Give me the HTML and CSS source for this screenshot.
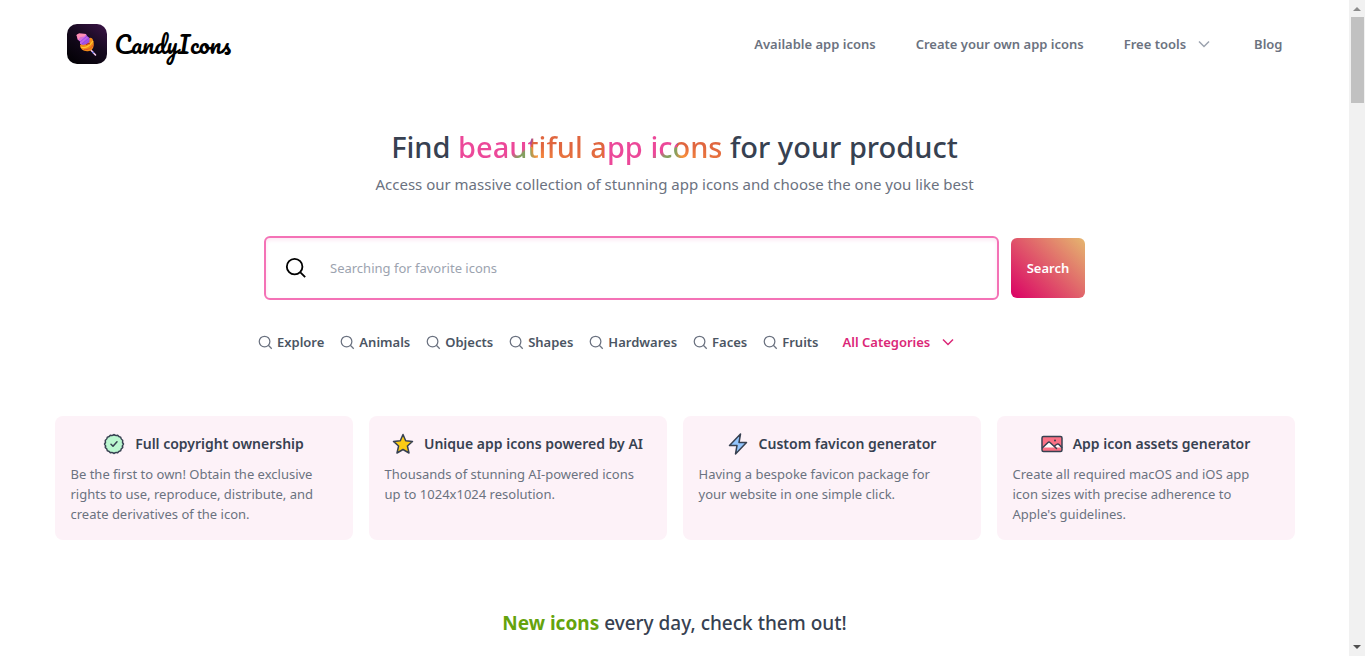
FILE: index.html
```html
<!DOCTYPE html>
<html lang="en">
<head>
  <meta charset="UTF-8">
  <meta name="viewport" content="width=device-width, initial-scale=1.0">
  <title>CandyIcons</title>
  <link rel="stylesheet" href="styles.css">
</head>
<body>
  <svg class="sprite" width="0" height="0" aria-hidden="true">
    <symbol id="search" viewBox="0 0 24 24">
      <circle cx="10.500" cy="10.500" r="8.500"/>
      <path d="M16.500 16.500L22 22"/>
    </symbol>
    <symbol id="chevron" viewBox="0 0 12 12">
      <path d="M1 3.500L6 8.500L11 3.500"/>
    </symbol>
  </svg>

  <div class="page">
    <header class="header">
      <a class="brand" href="#">
        <svg class="logo" viewBox="0 0 40 40" aria-hidden="true">
          <defs>
            <linearGradient id="logo-bg" x1="1" y1="0" x2="0.300" y2="1">
              <stop offset="0" stop-color="#3d1448"/>
              <stop offset="0.500" stop-color="#160a1f"/>
              <stop offset="1" stop-color="#050208"/>
            </linearGradient>
            <linearGradient id="candy" x1="0" y1="0" x2="1" y2="1">
              <stop offset="0" stop-color="#ff6fa8"/>
              <stop offset="0.500" stop-color="#c86fe8"/>
              <stop offset="1" stop-color="#7a35e0"/>
            </linearGradient>
          </defs>
          <rect width="40" height="40" rx="10" fill="url(#logo-bg)"/>
          <path d="M23 25L28.500 31" stroke="#f3c9ee" stroke-width="1.600" stroke-linecap="round"/>
          <path d="M25.500 28L26.500 29" stroke="#5b6cf0" stroke-width="1.600"/>
          <path d="M13 21C13 25 17 28 22 27C26 27 28 21 26 16C25 13 22 13 20 16Z" fill="#f28a18"/>
          <path d="M9.500 11L12 9.500L19 10L20 12L22.500 14L22.500 18L20 20L16 21L13 20L13 17.500L10.500 15.500Z" fill="url(#candy)"/>
          <path d="M9.500 11L12 9.500L19 10L17.500 12.500L13 13L11.500 16Z" fill="#ff8fb4"/>
          <path d="M13 18L20 12M15 20L22 14" stroke="#8d3bf0" stroke-width="0.800"/>
          <path d="M14 23C18 25 23 22 26 17" stroke="#ffc52e" stroke-width="1.300" fill="none"/>
          <path d="M17 25.500C21 26 25 24 26 21" stroke="#e2542b" stroke-width="1" fill="none"/>
          <path d="M19 21C20 20 22 19 23 20" stroke="#b3261e" stroke-width="1" fill="none"/>
        </svg>
        <span class="brand-name">CandyIcons</span>
      </a>
      <nav class="nav">
        <a href="#">Available app icons</a>
        <a href="#">Create your own app icons</a>
        <button type="button">Free tools <svg class="chevron"><use href="#chevron"/></svg></button>
        <a href="#">Blog</a>
      </nav>
    </header>

    <main>
      <section class="hero">
        <h1>Find <span class="rainbow">beautiful app icons</span> for your product</h1>
        <p>Access our massive collection of stunning app icons and choose the one you like best</p>
      </section>

      <form class="search">
        <label class="search-box">
          <svg class="search-icon" role="img" aria-label="Search"><use href="#search"/></svg>
          <input type="text" placeholder="Searching for favorite icons">
        </label>
        <button type="submit">Search</button>
      </form>

      <div class="categories">
        <a href="#"><svg><use href="#search"/></svg>Explore</a>
        <a href="#"><svg><use href="#search"/></svg>Animals</a>
        <a href="#"><svg><use href="#search"/></svg>Objects</a>
        <a href="#"><svg><use href="#search"/></svg>Shapes</a>
        <a href="#"><svg><use href="#search"/></svg>Hardwares</a>
        <a href="#"><svg><use href="#search"/></svg>Faces</a>
        <a href="#"><svg><use href="#search"/></svg>Fruits</a>
        <button type="button">All Categories <svg class="chevron"><use href="#chevron"/></svg></button>
      </div>

      <section class="features">
        <article class="feature">
          <h2>
            <svg viewBox="0 0 22 22"><path d="M11 1.500Q12.500 3 14.600 2.300Q15.800 4 17.700 4.300Q17.800 6.300 19.700 7.400Q19 9.500 20.500 11Q19 12.500 19.700 14.600Q17.800 15.700 17.700 17.700Q15.800 18 14.600 19.700Q12.500 19 11 20.500Q9.500 19 7.400 19.700Q6.200 18 4.300 17.700Q4.200 15.700 2.300 14.600Q3 12.500 1.500 11Q3 9.500 2.300 7.400Q4.200 6.300 4.300 4.300Q6.200 4 7.400 2.300Q9.500 3 11 1.500Z" fill="#bbf7d0"/><path d="M8 11.200L10 13.200L14 8.800" fill="none"/></svg>
            Full copyright ownership
          </h2>
          <p>Be the first to own! Obtain the exclusive rights to use, reproduce, distribute, and create derivatives of the icon.</p>
        </article>
        <article class="feature">
          <h2>
            <svg viewBox="0 0 22 22"><path d="M11 1.500L13.700 7.800L20.500 8.400L15.400 13L17 20L11 16.500L5 20L6.600 13L1.500 8.400L8.300 7.800Z" fill="#facc15"/></svg>
            Unique app icons powered by AI
          </h2>
          <p>Thousands of stunning AI-powered icons up to 1024x1024 resolution.</p>
        </article>
        <article class="feature">
          <h2>
            <svg viewBox="0 0 22 22"><path d="M13.500 1L2.500 12.500H10L8.500 21L19.500 9.500H12Z" fill="#93c5fd"/></svg>
            Custom favicon generator
          </h2>
          <p>Having a bespoke favicon package for your website in one simple click.</p>
        </article>
        <article class="feature">
          <h2>
            <svg viewBox="0 0 22 22"><rect x="1" y="3.500" width="20" height="15" rx="1.500" fill="#fb7185"/><path d="M2 14.500L7 9.500Q8 8.500 9 9.500L14.500 15L15 12.500L16 11.500Q17 11 18 11.800L20.500 14.500Z" fill="#fff" stroke="none"/><path d="M1.500 14.800L7 9.500Q8 8.500 9 9.500L15.500 15.500M13.500 13L15.500 11.500Q17 10.500 18 11.500L20.800 14.500" fill="none"/><circle class="dot" cx="14" cy="7.500" r="1"/></svg>
            App icon assets generator
          </h2>
          <p>Create all required macOS and iOS app icon sizes with precise adherence to Apple's guidelines.</p>
        </article>
      </section>

      <h2 class="new-icons"><strong>New icons</strong> every day, check them out!</h2>
    </main>
  </div>

  <div class="scrollbar" aria-hidden="true">
    <svg viewBox="0 0 16 17"><path d="M4 11L8 7L12 11Z" fill="#8b8b8b"/></svg>
    <div class="thumb"></div>
    <svg viewBox="0 0 16 17"><path d="M4 6L8 10L12 6Z" fill="#505050"/></svg>
  </div>
</body>
</html>
```
FILE: styles.css
```css
* {
  box-sizing: border-box;
}
body {
  display: flex;
  margin: 0;
  min-height: 100vh;
  font-family: "Segoe UI", "Noto Sans", sans-serif;
  font-size: 13px;
  line-height: 20px;
  color: #374151;
  background: #fff;
}
h1, h2, p {
  margin: 0;
}
a {
  color: inherit;
  text-decoration: none;
}
button {
  padding: 0;
  border: none;
  background: none;
  font: inherit;
  color: inherit;
  cursor: pointer;
}
.sprite {
  position: absolute;
}
.page {
  flex: 1;
  min-width: 0;
}
.header {
  display: flex;
  align-items: center;
  justify-content: space-between;
  max-width: 1280px;
  margin: 0 auto;
  padding: 24px 32px;
}
.brand {
  display: flex;
  align-items: center;
  gap: 8px;
}
.logo {
  width: 40px;
  height: 40px;
}
.brand-name {
  font-family: Pacifico, cursive;
  font-size: 24px;
  line-height: 40px;
  color: #000;
}
.nav {
  display: flex;
  align-items: center;
  gap: 40px;
  font-weight: 600;
  color: #6b7280;
}
.nav button {
  display: flex;
  align-items: center;
  gap: 12px;
}
.nav a:last-child {
  margin-left: 4px;
}
.chevron {
  width: 12px;
  height: 12px;
  fill: none;
  stroke: #9ca3af;
  stroke-width: 1.500;
}
.hero {
  padding-top: 39px;
  text-align: center;
}
h1 {
  font-size: 29px;
  font-weight: 500;
  line-height: 40px;
}
.rainbow {
  color: transparent;
  background: conic-gradient(from 0deg, #9c4aa8, #e0663f 25deg, #e0663f 90deg, #fb923c 150deg, #84a060 190deg, #84a060 230deg, #ec4899 250deg, #ec4899 330deg, #9c4aa8) 0 0 / 146px 100%;
  -webkit-background-clip: text;
  background-clip: text;
}
.hero p {
  margin-top: 5px;
  font-size: 15px;
  line-height: 24px;
  color: #6b7280;
}
.search {
  display: flex;
  align-items: center;
  gap: 12px;
  max-width: 821px;
  margin: 40px auto 0;
}
.search-box {
  display: flex;
  flex: 1;
  align-items: center;
  gap: 21px;
  height: 64px;
  padding: 0 19px;
  border: 2px solid #f472b6;
  border-radius: 6px;
  box-shadow: inset 0 2px 4px #fce7f3;
}
.search-icon {
  width: 22px;
  height: 22px;
  fill: none;
  stroke: #000;
  stroke-width: 2;
}
.search input {
  flex: 1;
  border: none;
  outline: none;
  background: none;
  font: inherit;
}
.search input::placeholder {
  color: #9ca3af;
}
.search button {
  width: 74px;
  height: 60px;
  border-radius: 6px;
  font-weight: 600;
  color: #fff;
  background: linear-gradient(45deg, #db0065, #e5b76f);
}
.categories {
  display: flex;
  flex-wrap: wrap;
  gap: 16px;
  max-width: 833px;
  margin: 32px auto 0;
  font-weight: 600;
  color: #4b5563;
}
.categories a {
  display: flex;
  align-items: center;
  gap: 4px;
}
.categories a svg {
  width: 15px;
  height: 15px;
  fill: none;
  stroke: #6b7280;
  stroke-width: 2;
}
.categories button {
  display: flex;
  align-items: center;
  gap: 12px;
  margin-left: 8px;
  color: #db2777;
}
.categories .chevron {
  stroke: #db2777;
}
.features {
  display: grid;
  grid-template-columns: repeat(4, 1fr);
  gap: 16px;
  max-width: 1240px;
  margin: 64px auto 0;
}
.feature {
  padding: 16px;
  border-radius: 8px;
  background: #fdf2f8;
}
.feature h2 {
  display: flex;
  align-items: center;
  justify-content: center;
  gap: 10px;
  font-size: 14px;
  font-weight: 600;
  line-height: 24px;
}
.feature h2 svg {
  flex: none;
  width: 22px;
  height: 22px;
  stroke: #374151;
  stroke-width: 1.500;
  stroke-linejoin: round;
  stroke-linecap: round;
}
.feature h2 .dot {
  fill: #374151;
  stroke: none;
}
.feature p {
  margin-top: 8px;
  padding-right: 12px;
  color: #6b7280;
}
.new-icons {
  margin: 69px 0 16px;
  font-size: 19px;
  font-weight: 500;
  line-height: 28px;
  text-align: center;
}
.new-icons strong {
  color: #65a30d;
}
.scrollbar {
  display: flex;
  flex-direction: column;
  width: 16px;
  background: #f1f1f1;
}
.scrollbar svg {
  width: 16px;
  height: 17px;
}
.thumb {
  height: 86px;
  margin: 0 1px auto 2px;
  background: #c1c1c1;
}
```
